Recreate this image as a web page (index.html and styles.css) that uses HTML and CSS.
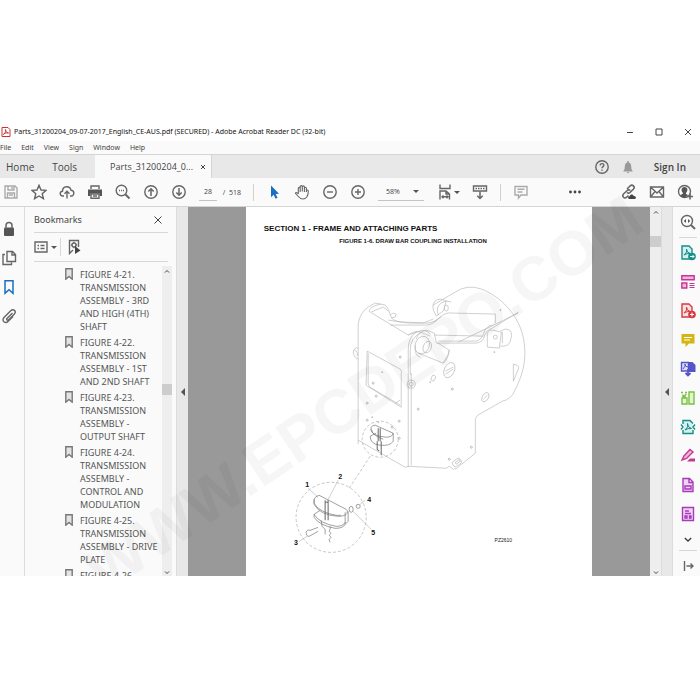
FILE: index.html
```html
<!DOCTYPE html>
<html lang="en">
<head>
  <meta charset="UTF-8">
  <title>Parts_31200204_09-07-2017_English_CE-AUS.pdf</title>
  <link rel="stylesheet" href="styles.css">
</head>
<body>
  <div class="app">

    <!-- title bar -->
    <header class="titlebar">
      <svg class="logo" viewBox="0 0 10 10"><path d="M1 .5h6l2 2v7H1z" fill="#fff" stroke="#c33" /><path d="M2.500 7.500C5 5 5 3 4.500 2.500S4 5 7.500 6C5 5.500 3 6.500 2.500 7.500" fill="none" stroke="#c33"/></svg>
      <span class="title">Parts_31200204_09-07-2017_English_CE-AUS.pdf (SECURED) - Adobe Acrobat Reader DC (32-bit)</span>
      <div class="window-buttons">
        <button aria-label="Minimize"><svg viewBox="0 0 8 8"><path d="M1 4.500h6"/></svg></button>
        <button aria-label="Maximize"><svg viewBox="0 0 8 8"><path d="M1 1h6v6H1z"/></svg></button>
        <button aria-label="Close"><svg viewBox="0 0 8 8"><path d="M1 1l6 6M7 1L1 7"/></svg></button>
      </div>
    </header>

    <nav class="menubar">
      <button>File</button>
      <button>Edit</button>
      <button>View</button>
      <button>Sign</button>
      <button>Window</button>
      <button>Help</button>
    </nav>

    <!-- tabs -->
    <nav class="tabs">
      <button class="tab home">Home</button>
      <button class="tab">Tools</button>
      <div class="tab-active">
        <span>Parts_31200204_0...</span>
        <button aria-label="Close tab"><svg viewBox="0 0 6 6"><path d="M1 1l4 4M5 1L1 5"/></svg></button>
      </div>
      <div class="account">
        <button aria-label="Help"><svg class="icon" viewBox="0 0 16 16"><circle cx="8" cy="8" r="6.200"/><path d="M6.200 6.500c0-2.600 3.700-2.300 3.700-.2C9.900 7.700 8 7.600 8 9.300M8 10.600v1.200"/></svg></button>
        <button aria-label="Notifications"><svg class="icon" viewBox="0 0 16 16"><path d="M3 12.500c2-1.500 1.500-4 2-6.500.3-1.500 1.300-2.300 2.300-2.500V2h1.400v1.500c1 .2 2 1 2.300 2.500.5 2.500 0 5 2 6.500zM6.500 13.200h3L8 14.500z" fill="#999" stroke="none"/></svg></button>
        <button class="signin">Sign In</button>
      </div>
    </nav>

    <!-- toolbar -->
    <div class="toolbar">
      <button aria-label="Save"><svg class="icon light" viewBox="0 0 16 16"><path d="M2 2h10l2 2v10H2zM5 2v4h6V2M9 3v2M4.500 14V9h7v5M6 11h4"/></svg></button>
      <button aria-label="Star"><svg class="icon" viewBox="0 0 16 16"><path d="M8 1.300l2 4.700 5 .4-3.800 3.300 1.200 5L8 12l-4.400 2.700 1.200-5L1 6.400 6 6z"/></svg></button>
      <button aria-label="Upload"><svg class="icon" viewBox="0 0 16 16"><path d="M5 12H4C.5 12 .3 7.500 3.500 7.200 3.500 1.500 11 1.500 12 6.200c3.700 0 3.700 5.800.3 5.800H11M8 14.500V7.500M5.500 9.800L8 7.300l2.500 2.500"/></svg></button>
      <button aria-label="Print"><svg class="icon" viewBox="0 0 16 16"><path d="M1 5.500h14V12h-2.500V9.500h-9V12H1z" fill="#555" stroke="none"/><path d="M4 5V2h8v3M4 10h8v4.300H4zM6 12h4"/></svg></button>
      <button aria-label="Find"><svg class="icon" viewBox="0 0 16 16"><circle cx="6.500" cy="6.500" r="5.300"/><path d="M10.500 10.500l4 4" stroke-width="2"/><path d="M4 6.500h1M6 6.500h1M8 6.500h1"/></svg></button>
      <button aria-label="Previous page"><svg class="icon" viewBox="0 0 16 16"><circle cx="8" cy="8" r="6.200"/><path d="M8 12V5M5.300 7.500L8 4.800l2.700 2.700" stroke-width="1.500"/></svg></button>
      <button aria-label="Next page"><svg class="icon" viewBox="0 0 16 16"><circle cx="8" cy="8" r="6.200"/><path d="M8 4v7M5.300 8.500L8 11.200l2.700-2.700" stroke-width="1.500"/></svg></button>
      <div class="pager"><input type="text" value="28" aria-label="Page number"><span>/&nbsp; 518</span></div>
      <span class="sep"></span>
      <button aria-label="Select"><svg class="icon" viewBox="0 0 16 16"><path d="M5 1.500v11.800l2.700-2.500 1.800 3.900 2-.9-1.800-3.800 3.300-.3z" fill="#1b6ec2" stroke="none"/></svg></button>
      <button aria-label="Hand"><svg class="icon" viewBox="0 0 16 16"><path d="M4.300 10V4.500c0-1.500 1.900-1.500 1.900 0V8M6.200 7V2.700c0-1.500 2.100-1.500 2.100 0V7.500M8.300 7V3c0-1.500 2.100-1.500 2.100 0v5M10.400 7V4.300c0-1.500 2-1.500 2 0V8M12.400 7c0-1.500 1.900-1.300 1.900 0-.1 5-1.300 8-5.500 8C5.500 15 4.500 12.500 1.700 9.700c-.7-1.300.9-2 2.600.3" stroke-width="1.100"/></svg></button>
      <button aria-label="Zoom out"><svg class="icon" viewBox="0 0 16 16"><circle cx="8" cy="8" r="6.200"/><path d="M5 8h6"/></svg></button>
      <button aria-label="Zoom in"><svg class="icon" viewBox="0 0 16 16"><circle cx="8" cy="8" r="6.200"/><path d="M5 8h6M8 5v6"/></svg></button>
      <div class="zoom"><select aria-label="Zoom level"><option>58%</option></select></div>
      <button class="fit" aria-label="Fit width"><svg class="icon" viewBox="0 0 16 16"><path d="M3 .5v4h10v-4M3 15.500V7h6l3.500 3v5.500M9 7v3h3.500M5 12.800h6M6.500 11.500L5 12.800l1.500 1.400M9.500 11.500l1.500 1.300-1.500 1.400"/></svg><i class="caret"></i></button>
      <button aria-label="Read mode"><svg class="icon" viewBox="0 0 16 16"><path d="M1.500 2h13v5h-13z"/><path d="M3.500 4.500h9" stroke-dasharray="1.500 1"/><path d="M8 7.500v7M5.300 11.800L8 14.500l2.700-2.700" stroke-width="1.500"/></svg></button>
      <span class="sep"></span>
      <button aria-label="Comment"><svg class="icon light" viewBox="0 0 16 16"><path d="M2 2.500h12v8.500H8L5.500 14v-3H2zM4.500 5.300h7M4.500 8h5"/></svg></button>
      <button class="more" aria-label="More tools"><svg class="icon" viewBox="0 0 16 16"><g fill="#444" stroke="none"><circle cx="3.500" cy="8" r="1.400"/><circle cx="8" cy="8" r="1.400"/><circle cx="12.500" cy="8" r="1.400"/></g></svg></button>
      <button aria-label="Share link"><svg class="icon" viewBox="0 0 16 16"><path d="M6 5l3-3c2.500-2.300 5.500.8 3.300 3.200L9 8.500c-1 .9-2 .9-3 0M9.300 6.500c-1-.9-2-.9-3 0L2.500 10c-2 2.500.8 5.200 3.200 3.200L7.500 11.500" stroke-width="1.600"/><path d="M8.500 15c-2-.1-1.700-2.700.2-2.700.4-2.500 3.600-2.500 4-.3 2.800-.3 2.800 3 .8 3z" fill="#444" stroke="none"/></svg></button>
      <button aria-label="Email"><svg class="icon" viewBox="0 0 16 16"><path d="M1.500 3h13v10h-13zM1.500 3L8 9l6.500-6M1.500 13l4.500-5.500M14.500 13L10 7.500"/></svg></button>
      <button aria-label="Add people"><svg class="icon" viewBox="0 0 16 16"><circle cx="7.500" cy="7.500" r="6"/><path d="M3 12c1-2 3-1.500 3-3-2.500-2.500-1.500-6 1.500-6s4 3.500 1.500 6v1l2 1L8 14z" fill="#555" stroke="none"/><path d="M13 9.500v6M10 12.500h6" stroke-width="1.600"/></svg></button>
    </div>

    <main class="workspace">
      <!-- left icons -->
      <nav class="rail">
        <button aria-label="Security"><svg class="icon" viewBox="0 0 16 16"><rect x="3" y="6.500" width="10" height="8.500" rx="1" fill="#555" stroke="none"/><path d="M5 8V4.500c0-4 6-4 6 0V8" stroke-width="1.500"/></svg></button>
        <button aria-label="Pages"><svg class="icon" viewBox="0 0 16 16"><path d="M6 1.500h5.500l3 3v7H6zM11 1.500V5h3.500M4 4.500H2v10h8.500v-2"/></svg></button>
        <button aria-label="Bookmarks"><svg class="icon blue" viewBox="0 0 16 16"><path d="M4 1.800h8v12.500l-4-3.500-4 3.500z"/></svg></button>
        <button aria-label="Attachments"><svg class="icon" viewBox="0 0 16 16"><path d="M11.500 5L6 10.500c-1 1.200.5 2.500 1.700 1.300l5.500-5.500c2.800-3.300-1-6-3.500-3.500L3 9.500c-3 3.500 1.500 6.500 4 4l5-5"/></svg></button>
      </nav>

      <aside class="bookmarks">
        <div class="panel-head">
          <h2>Bookmarks</h2>
          <button aria-label="Close panel"><svg viewBox="0 0 8 8"><path d="M.5.5l7 7M7.500.5l-7 7"/></svg></button>
        </div>
        <div class="panel-tools">
          <button class="options" aria-label="Options"><svg class="icon" viewBox="0 0 16 16"><path d="M2 3h12v10H2zM4.500 6.500H6M4.500 9.500H6M7.500 6.500h4M7.500 9.500h4"/></svg><i class="caret"></i></button>
          <button aria-label="Find bookmark"><svg class="icon" viewBox="0 0 16 16"><path d="M12.500 8V1.500h-9v13L7 11"/><circle cx="8" cy="6" r="2"/><path d="M8 2.800v1M8 8.200v1M4.800 6h1M10.200 6h1"/><path d="M9 7v8l5.500-3.500z" fill="#444" stroke="none"/></svg></button>
        </div>
        <div class="panel-body">
          <ul>
            <li><svg viewBox="0 0 8 12"><path d="M.8.8h6.400v10.400L4 8.500.8 11.200z"/></svg><a href="#">FIGURE 4-21. TRANSMISSION ASSEMBLY - 3RD AND HIGH (4TH) SHAFT</a></li>
            <li><svg viewBox="0 0 8 12"><path d="M.8.8h6.400v10.400L4 8.500.8 11.200z"/></svg><a href="#">FIGURE 4-22. TRANSMISSION ASSEMBLY - 1ST AND 2ND SHAFT</a></li>
            <li><svg viewBox="0 0 8 12"><path d="M.8.8h6.400v10.400L4 8.500.8 11.200z"/></svg><a href="#">FIGURE 4-23. TRANSMISSION ASSEMBLY - OUTPUT SHAFT</a></li>
            <li><svg viewBox="0 0 8 12"><path d="M.8.8h6.400v10.400L4 8.500.8 11.200z"/></svg><a href="#">FIGURE 4-24. TRANSMISSION ASSEMBLY - CONTROL AND MODULATION</a></li>
            <li><svg viewBox="0 0 8 12"><path d="M.8.8h6.400v10.400L4 8.500.8 11.200z"/></svg><a href="#">FIGURE 4-25. TRANSMISSION ASSEMBLY - DRIVE PLATE</a></li>
            <li><svg viewBox="0 0 8 12"><path d="M.8.8h6.400v10.400L4 8.500.8 11.200z"/></svg><a href="#">FIGURE 4-26.</a></li>
          </ul>
          <div class="scroll">
            <svg viewBox="0 0 6 4"><path d="M1 3.500l2-2 2 2"/></svg>
            <span class="space-a"></span><span class="thumb"></span><span class="space-b"></span>
            <svg viewBox="0 0 6 4"><path d="M1 .5l2 2 2-2"/></svg>
          </div>
        </div>
      </aside>
      <button class="splitter" aria-label="Hide panel"><i></i></button>

      <!-- document -->
      <section class="viewer">
        <article class="sheet">
          <h1>SECTION 1 - FRAME AND ATTACHING PARTS</h1>
          <h3>FIGURE 1-6. DRAW BAR COUPLING INSTALLATION</h3>
          <svg class="figure" viewBox="246 280 346 280">
            <!-- frame -->
            <g class="line">
              <path d="M358 440V320q2-12 10-17l7-4 10 2q4 4 5 10c2 6 8 7 14 7l22 1q8 0 15-7" transform="translate(0 4)"/>
              <path d="M358 440l47 27 3-1 38 2 3-2 4 3q4 0 7-4l15-12V422q-1-6 6-9l21-12q9-2 12-10c8-15 12-30 10-46-2-25-20-47-43-56q-14-5-26 3l-22 13"/>
              <path d="M370 312l38 23 9-3q8-4 13 2M371 312l12-5 5 4M408 335q7-5 12-3l10 4M369 312q0-4 5-6l6-2M388 320l20 3 15 0 10-4M390 325h35q8 0 14-7 6-6 12-5l44 1v9"/>
              <path d="M408 467V375M411 465V373M408 375v-26q0-12 9-18M410 375v-25q0-12 10-17M434 335l48 1M436 343h40q7-1 8-7 2-6 8-8l26-16M438 341h38q5-1 7-7 2-7 8-9M458 342l60-29"/>
              <path d="M367 351l33 18q2 2 1 5v33l-32-20q-4-1-3-5zM368 353v31q1 4 5 5l27 16M395 403l5-3"/>
              <ellipse cx="422" cy="345" rx="7" ry="9" transform="rotate(20 422 345)"/>
              <ellipse cx="427" cy="347" rx="4" ry="6" transform="rotate(20 427 347)"/>
              <path d="M416 339q2-7 10-9l8 3 2 9 13 8q-1 9-6 13l-25-10M449 350l-1 4-5 9M420 357q-6-1-5-12"/>
              <path d="M433 310q-2-10 7-11l6 2-3 10-7 5zM438 315q-3-8 3-12l5-2 5 1"/>
              <ellipse cx="446" cy="308" rx="2" ry="3"/>
              <path d="M487 333q2-4 5-3l9 2-2 16-12-1zM500 331l5-2q9 0 5 12-2 6-10 5M502 332v11M513 381v-17l3 1q3 1 2 4z"/>
              <circle cx="495" cy="337" r="2"/>
              <ellipse cx="449" cy="370" rx="5" ry="8" transform="rotate(25 449 370)"/>
              <path d="M445 371l8-4M445 374l8-5"/>
              <ellipse cx="485" cy="397" rx="3" ry="5" transform="rotate(30 485 397)"/>
              <ellipse cx="433" cy="378" rx="2" ry="3" transform="rotate(20 433 378)"/>
              <path d="M483 399l4-4M358 348q-4-1-5 4 1 6 5 7M354 350q4 1 3 6M390 315l3-2 3 1-1 3-4 1"/>
              <circle cx="411" cy="384" r="4"/><circle cx="411" cy="384" r="2"/>
              <rect x="452" y="459" width="9" height="6" rx="2" transform="rotate(-35 457 462)"/>
              <rect x="455" y="461" width="5" height="2" transform="rotate(-35 457 462)"/>
            </g>
            <g class="holes">
              <circle cx="367" cy="403" r="1"/><circle cx="367" cy="420" r="1"/><circle cx="399" cy="421" r="1"/>
              <circle cx="399" cy="438" r="1"/><circle cx="373" cy="383" r="1"/><circle cx="382" cy="372" r=".5"/>
              <circle cx="400" cy="357" r="1"/><circle cx="418" cy="409" r="1"/><circle cx="452" cy="389" r="1"/>
              <circle cx="471" cy="447" r="1"/><circle cx="449" cy="459" r="1"/><circle cx="500" cy="310" r=".5"/>
              <circle cx="494" cy="352" r=".5"/><circle cx="430" cy="382" r=".5"/><circle cx="372" cy="417" r=".5"/>
              <circle cx="392" cy="427" r="1"/><circle cx="376" cy="396" r="1"/><circle cx="378" cy="422" r=".5"/>
            </g>
            <!-- coupling on the frame -->
            <g class="coupling">
              <path d="M371 427q-2 6 8 9l7 1q6 0 7-4l-18-8q-3 0-4 2zM370 436q0 8 10 9 10 1 13-4v-8M371 429q2 7 12 10M370 436l6-3"/>
              <path d="M378 428v13M380 428v13M377 441v8l2 2M381 441v14" class="pin"/>
            </g>
            <circle class="dash" cx="380" cy="439" r="18"/>
            <path class="dash" d="M370 456l-21 32"/>
            <!-- detail view -->
            <circle class="dash" cx="331" cy="517" r="35"/>
            <g class="coupling">
              <path d="M314 499q1-3 5-4l27 14q2 1 1 4-2 3-9 3-18-1-24-12zM314 499v4q5 9 22 12h5M320 510l-6 4v3q5 8 21 11 8 0 10-4l3-3v-10M314 514q5 9 22 12 7 0 9-4M345 512v12"/>
              <path d="M325 500v20M328 500v20M325 502h3" class="pin"/>
              <path d="M321 520l1 6 3 3v5M330 526v3l-1 2 2 2-2 2 2 2-2 2 1 3"/>
              <path d="M306 532q1-3 4-2l8-3M309 536l9-5M306 532q0 4 3 4"/>
              <ellipse cx="351" cy="509" rx="2" ry="3"/><circle cx="358" cy="506" r="2"/>
            </g>
            <g class="line">
              <path d="M308 488l10 9M338 480l-12 23M365 500l-5 4M371 529l-18-18M299 541l8-5"/>
            </g>
            <g class="callouts">
              <text x="307" y="487">1</text>
              <text x="340" y="479">2</text>
              <text x="296" y="545">3</text>
              <text x="369" y="502">4</text>
              <text x="373" y="535">5</text>
            </g>
            <text class="code" x="503" y="542">PZ2610</text>
          </svg>
        </article>
      </section>
      <div class="scroll page-scroll">
        <svg viewBox="0 0 6 4"><path d="M1 3.500l2-2 2 2"/></svg>
        <span class="space-a"></span><span class="thumb"></span><span class="space-b"></span>
        <svg viewBox="0 0 6 4"><path d="M1 .5l2 2 2-2"/></svg>
      </div>
      <button class="splitter right" aria-label="Hide tools"><i></i></button>

      <!-- right tools -->
      <nav class="rail tools">
        <button aria-label="Search tools"><svg class="icon" viewBox="0 0 16 16"><circle cx="7" cy="7" r="5.500"/><path d="M11 11l4 4" stroke-width="2"/><path d="M6 5v4L3.800 7zM8 5v4l2.200-2z" fill="#555" stroke="none"/></svg></button>
        <hr>
        <button aria-label="Export PDF"><svg class="icon teal" viewBox="0 0 16 16"><path d="M2 1h7l3 3v10H2z" fill="#d5efed"/><path d="M4 10q4-3 2.500-6 0 4 4 4.500-3.500-.5-6.500 1.500" stroke-width="1"/><circle cx="12" cy="11.500" r="3.800" fill="#168e89" stroke="none"/><path d="M10 11.500h4M12.500 10l1.500 1.500-1.500 1.500" stroke="#fff" stroke-width="1"/></svg></button>
        <button aria-label="Organize pages"><svg class="icon pink" viewBox="0 0 16 16"><path d="M1.800 1.800h12.400v4H1.800zM1.800 9h5v5h-5z" fill="#f3b5df"/><path d="M9.500 9.500h5M9.500 11.500h5M9.500 13.500h5" stroke-width="1"/></svg></button>
        <button aria-label="Create PDF"><svg class="icon red" viewBox="0 0 16 16"><path d="M2 1h7l3 3v10H2z" fill="#fbe0e0"/><path d="M4 10q4-3 2.500-6 0 4 4 4.500-3.500-.5-6.500 1.500" stroke-width="1"/><circle cx="12" cy="11.500" r="3.800" fill="#d33b42" stroke="none"/><path d="M10 11.500h4M12 9.500v4" stroke="#fff" stroke-width="1"/></svg></button>
        <button aria-label="Comment tool"><svg class="icon" viewBox="0 0 16 16"><path d="M1.500 2h13v9.500H9L5.500 15v-3.500h-4z" fill="#d3b516" stroke="none"/><path d="M4 5.500h8M4 8h6" stroke="#fff" stroke-width="1"/></svg></button>
        <button aria-label="Combine files"><svg class="icon violet" viewBox="0 0 16 16"><path d="M1.500 1.500h7V10h-7z" fill="#dcdcfa"/><path d="M8.500 1h4l3 3v7h-7z" fill="#5555c8" stroke="none"/><path d="M3 8q3-3 2-5 0 3 3 3" stroke-width="1"/><path d="M8 8v6M5.500 12L8 14.500l2.500-2.500" stroke-width="1.800"/></svg></button>
        <button aria-label="Compress"><svg class="icon green" viewBox="0 0 16 16"><path d="M9 2h5v12H9zM7 8H2v6h5z" fill="#e3f5cf"/><path d="M1 2.500h2M5 2.500h2M6.500 4L3 7M3 4.500V7h3"/></svg></button>
        <button aria-label="Compare"><svg class="icon teal" viewBox="0 0 16 16"><path d="M3 5V1.500h7l3 3V11v3.500H3V11l2-3z" fill="#d5efed" stroke="none"/><path d="M3 5V1.500h7l3 3M3 11v3.500h10V11M1 5.500l2 2.500-2 2.500M15 5.500L13 8l2 2.500" /><path d="M5 11q4-3 2.500-6.500 0 4 4 5-3.500-.5-6.500 1.500" stroke-width="1"/></svg></button>
        <button aria-label="Redact"><svg class="icon pink" viewBox="0 0 16 16"><path d="M2 12l2-4 6-6.500L13 4 6.500 10.500z" fill="#f3b5df"/><path d="M1 13.500h14v-3h-5l-3 3z" fill="#c5388f" stroke="none"/></svg></button>
        <button aria-label="Fill and sign"><svg class="icon purple" viewBox="0 0 16 16"><path d="M3 1.500h6.500l3.500 3.500v9.500H3zM9 1.500V5.500h4" fill="#f0d3f5"/><path d="M5 9h6v3H5z"/></svg></button>
        <button aria-label="Prepare form"><svg class="icon purple" viewBox="0 0 16 16"><path d="M2.500 1.500h11v13h-11z" fill="#f0d3f5"/><path d="M5 5h4M5 7.500h6M5 10h2v2H5zM9.500 10h1.500v2H9.500z"/></svg></button>
        <button class="down" aria-label="More"><svg viewBox="0 0 8 5"><path d="M.8 1L4 4l3.200-3"/></svg></button>
        <hr>
        <button aria-label="Expand tools"><svg class="icon" viewBox="0 0 16 16"><path d="M4.500 3v10M6.500 8H13M10.500 5.500L13 8l-2.500 2.500"/></svg></button>
      </nav>
    </main>

    <div class="watermark" aria-hidden="true">WWW.EPCDEPO.COM</div>
  </div>
</body>
</html>
```
FILE: styles.css
```css
*{box-sizing: border-box;}
body{
  margin: 0;
  height: 100vh;
  padding: 122px 0 124px;
  background-color: #fff;
  color: #444;
  font-family: "Noto Sans", "Open Sans", sans-serif;
}
button{
  border: none;
  padding: 0;
  background: none;
  color: inherit;
  font: inherit;
  display: flex;
  align-items: center;
  justify-content: center;
}
svg{display: block;}
button svg, .scroll svg{fill: none; stroke: #444;}
.app{
  position: relative;
  height: 100%;
  display: flex;
  flex-direction: column;
  overflow: hidden;
}

/* icons */
button .icon{
  width: 16px;
  height: 16px;
  flex: none;
  stroke: #666;
  stroke-width: 1.4;
}
button .light{stroke: #aaa;}
button .blue{stroke: #1b6ec2; stroke-width: 1.5;}
button .teal{stroke: #168e89;}
button .pink{stroke: #c5388f;}
button .red{stroke: #d33b42;}
button .violet{stroke: #5555c8;}
button .green{stroke: #7bc043;}
button .purple{stroke: #a63ab8;}
.caret{
  border: 3px solid transparent;
  border-top-color: #555;
  border-bottom: none;
}

/* title bar */
.titlebar{
  height: 19px;
  display: flex;
  align-items: center;
  padding: 0 8px 0 1px;
  font-size: 7px;
  color: #111;
  white-space: nowrap;
}
.logo{width: 10px; height: 10px; margin-right: 3px;}
.window-buttons{
  display: flex;
  gap: 21px;
  margin-left: auto;
}
.window-buttons svg{width: 8px; height: 8px;}

.menubar{
  height: 13px;
  display: flex;
  align-items: center;
  gap: 10px;
  background-color: #fafafa;
  font-size: 7px;
}

/* tabs */
.tabs{
  height: 24px;
  display: flex;
  align-items: center;
  background-color: #e8e8e8;
  border-top: 1px solid #d4d4d4;
  font-family: "Open Sans", sans-serif;
  font-size: 10px;
}
.tab{margin-right: 18px;}
.home{margin-left: 6px;}
.tab-active{
  height: 100%;
  display: flex;
  align-items: center;
  gap: 7px;
  padding: 0 5px 0 15px;
  background-color: #fafafa;
  border-right: 1px solid #d4d4d4;
  font-size: 9px;
}
.tab-active svg{width: 6px; height: 6px;}
.account{
  display: flex;
  align-items: center;
  gap: 10px;
  margin-left: auto;
  padding-right: 14px;
}
.signin{margin-left: 8px; font-weight: 600;}

/* toolbar */
.toolbar{
  height: 29px;
  display: flex;
  align-items: center;
  gap: 12px;
  padding: 0 7px 0 3px;
  background-color: #fafafa;
  border-bottom: 1px solid #d4d4d4;
  font-family: "Open Sans", sans-serif;
  font-size: 7px;
}
.toolbar button{width: 16px;}
.toolbar .fit{width: 24px; gap: 1px;}
.toolbar .more{margin: 0 auto;}
.pager{
  width: 42px;
  display: flex;
  align-items: center;
  justify-content: space-between;
  white-space: nowrap;
}
.pager input{
  width: 18px;
  height: 17px;
  padding: 0;
  border: none;
  border-bottom: 1px solid #c4c4c4;
  background: none;
  color: #444;
  font: inherit;
  text-align: center;
}
.sep{width: 1px; height: 17px; background-color: #d0d0d0;}
.zoom{
  width: 46px;
  display: flex;
  align-items: center;
  border-bottom: 1px solid #c4c4c4;
}
.zoom::after{
  content: '';
  border: 3px solid transparent;
  border-top-color: #555;
  border-bottom: none;
  margin-right: 5px;
}
.zoom select{
  appearance: none;
  flex: 1;
  height: 16px;
  padding: 0 0 0 8px;
  border: none;
  background: none;
  color: #444;
  font: inherit;
}

/* workspace */
.workspace{
  flex: 1;
  min-height: 0;
  display: flex;
}
.rail{
  width: 25px;
  display: flex;
  flex-direction: column;
  align-items: center;
  gap: 13px;
  padding: 14px 6px 0 0;
  background-color: #fafafa;
  border-right: 1px solid #dcdcdc;
}

/* bookmarks panel */
.bookmarks{
  width: 151px;
  display: flex;
  flex-direction: column;
  padding: 0 4px 0 9px;
  background-color: #fafafa;
}
.panel-head{
  height: 26px;
  display: flex;
  align-items: center;
  justify-content: space-between;
  margin-right: 4px;
  padding-right: 6px;
  border-bottom: 1px solid #d8d8d8;
}
.panel-head h2{
  margin: 0;
  font-size: 9px;
  font-weight: 400;
}
.panel-head svg{width: 8px; height: 8px;}
.panel-tools{
  height: 29px;
  display: flex;
  align-items: center;
  margin-right: 4px;
  border-bottom: 1px solid #d8d8d8;
}
.panel-tools .options{
  width: 27px;
  gap: 2px;
  height: 18px;
  padding-right: 4px;
  margin-right: 5px;
  border-right: 1px solid #d8d8d8;
}
.panel-body{
  flex: 1;
  min-height: 0;
  display: flex;
  justify-content: space-between;
}
.bookmarks ul{
  flex: 1;
  margin: 0;
  padding: 6px 0 0 31px;
  list-style-type: none;
  overflow: hidden;
}
.bookmarks li{
  display: flex;
  gap: 7px;
  margin-bottom: 3px;
  font-size: 9px;
  line-height: 13px;
}
.bookmarks li svg{
  width: 8px;
  height: 12px;
  flex: none;
  fill: #e4e4e4;
  stroke: #777;
  stroke-width: 1.4;
}
.bookmarks a{
  width: 82px;
  flex: none;
  color: #555;
  text-decoration: none;
}

/* scrollbars */
.scroll{
  width: 10px;
  display: flex;
  flex-direction: column;
  align-items: center;
  padding: 3px 0 1px;
  background-color: #eee;
}
.bookmarks .scroll{margin-top: 4px;}
.scroll svg{width: 6px; height: 4px; flex: none;}
.thumb{width: 100%; height: 11px; background-color: #cdcdcd;}
.space-a{flex: 110;}
.space-b{flex: 174;}
.page-scroll{width: 11px;}
.page-scroll .space-a{flex: 22;}
.page-scroll .space-b{flex: 326;}

.splitter{
  width: 12px;
  background-color: #e8e8e8;
  border-left: 1px solid #dcdcdc;
}
.splitter i{
  border: 4px solid transparent;
  border-right-color: #555;
  border-left: none;
}
.right{border-right: 1px solid #dcdcdc;}

/* document */
.viewer{
  flex: 1;
  min-width: 0;
  display: flex;
  justify-content: center;
  background-color: #999;
  overflow: hidden;
}
.sheet{
  width: 75%;
  background-color: #fff;
  color: #111;
  font-family: "Liberation Sans", Arial, sans-serif;
}
.sheet h1{
  margin: 17px 0 0 18px;
  font-size: 8px;
  line-height: 10px;
}
.sheet h3{
  margin: 3px 0 0;
  padding-right: 12px;
  font-size: 6px;
  line-height: 8px;
  text-align: center;
}
.figure{width: 100%; margin-top: 35px;}
.line, .coupling, .holes{
  fill: none;
  stroke: #b0b0b0;
  stroke-width: .6;
}
.holes{stroke: #999;}
.coupling{stroke: #777; stroke-width: .7;}
.pin{stroke: #666; stroke-width: 1;}
.dash{
  fill: none;
  stroke: #b8b8b8;
  stroke-width: .8;
  stroke-dasharray: 3 2;
}
.callouts{
  fill: #111;
  font-size: 7px;
  font-weight: bold;
  text-anchor: middle;
}
.code{fill: #222; font-size: 5px; text-anchor: middle;}

/* right tools */
.tools{
  width: 27px;
  padding: 7px 0 0 3px;
  border-right: none;
}
.tools hr{
  width: 18px;
  margin: -6px 0;
  border: none;
  border-top: 1px solid #d8d8d8;
}
.tools .down svg{width: 8px; height: 5px; stroke-width: 1.5;}
.tools .down{height: 8px;}

.watermark{
  position: absolute;
  left: 52%;
  top: 60%;
  transform: translate(-50%, -50%) rotate(-34deg);
  color: #000;
  opacity: .03;
  font-family: "Liberation Sans", Arial, sans-serif;
  font-size: 62px;
  font-weight: bold;
  line-height: 1;
  white-space: nowrap;
  pointer-events: none;
}
```
